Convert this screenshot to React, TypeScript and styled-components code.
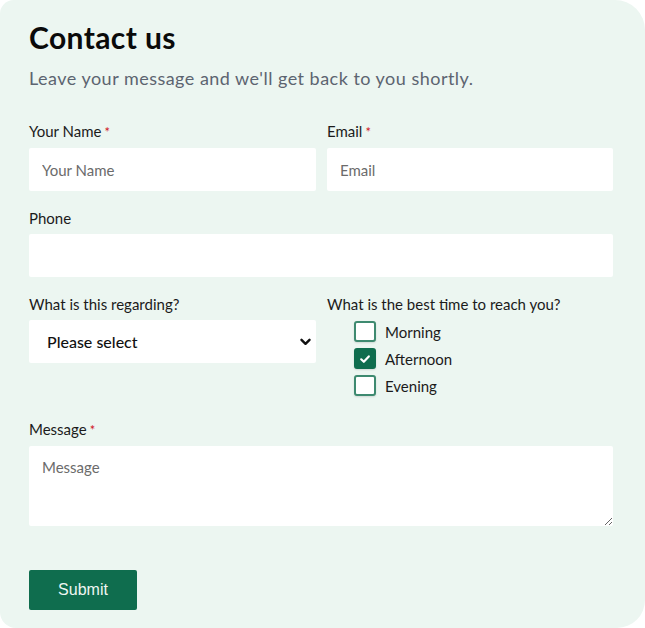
import React, { useState } from 'react';
import styled, { createGlobalStyle } from 'styled-components';

const GlobalStyle = createGlobalStyle`
  html, body {
    margin: 0;
    padding: 0;
    background: #ffffff;
  }
  * {
    box-sizing: border-box;
  }
`;

const times = ['Morning', 'Afternoon', 'Evening'];

const CheckIcon = () => (
  <svg width="12" height="12" viewBox="0 0 12 12" fill="none">
    <path
      d="M2.2 6.3 L4.8 8.8 L9.8 3.4"
      stroke="#ffffff"
      strokeWidth="2.2"
      strokeLinecap="round"
      strokeLinejoin="round"
    />
  </svg>
);

const Chevron = () => (
  <svg width="11" height="8" viewBox="0 0 11 8" fill="none">
    <path
      d="M1.5 1.8 L5.5 5.8 L9.5 1.8"
      stroke="#111111"
      strokeWidth="2.4"
      strokeLinecap="round"
      strokeLinejoin="round"
    />
  </svg>
);

const App: React.FC = () => {
  const [checked, setChecked] = useState<string[]>(['Afternoon']);

  const toggle = (t: string) => {
    setChecked((prev) =>
      prev.includes(t) ? prev.filter((x) => x !== t) : [...prev, t]
    );
  };

  return (
    <>
      <GlobalStyle />
      <Card>
        <Title>Contact us</Title>
        <Subtitle>Leave your message and we'll get back to you shortly.</Subtitle>

        <Form onSubmit={(e) => e.preventDefault()}>
          <Row>
            <Field>
              <Label>
                Your Name<Req>*</Req>
              </Label>
              <Input type="text" placeholder="Your Name" />
            </Field>
            <Field>
              <Label>
                Email<Req>*</Req>
              </Label>
              <Input type="email" placeholder="Email" />
            </Field>
          </Row>

          <Field>
            <Label>Phone</Label>
            <Input type="tel" />
          </Field>

          <Row>
            <Field>
              <Label>What is this regarding?</Label>
              <SelectWrap>
                <Select defaultValue="">
                  <option value="">Please select</option>
                  <option value="general">General enquiry</option>
                  <option value="support">Support</option>
                </Select>
                <SelectArrow>
                  <Chevron />
                </SelectArrow>
              </SelectWrap>
            </Field>
            <Field>
              <Label>What is the best time to reach you?</Label>
              <CheckList>
                {times.map((t) => {
                  const on = checked.includes(t);
                  return (
                    <CheckRow key={t} onClick={() => toggle(t)}>
                      <Box $checked={on}>{on && <CheckIcon />}</Box>
                      <CheckText>{t}</CheckText>
                    </CheckRow>
                  );
                })}
              </CheckList>
            </Field>
          </Row>

          <Field>
            <Label>
              Message<Req>*</Req>
            </Label>
            <TextArea placeholder="Message" />
          </Field>

          <SubmitButton type="submit">Submit</SubmitButton>
        </Form>
      </Card>
    </>
  );
};

export default App;

const Card = styled.div`
  width: 645px;
  height: 628px;
  background: #ecf6f1;
  border-radius: 14px 30px 28px 16px;
  padding: 20px 32px 0 29px;
  font-family: Lato, 'Open Sans', sans-serif;
  color: #1b1b1b;
`;

const Title = styled.h1`
  margin: 0;
  font-size: 30px;
  line-height: 34px;
  font-weight: 700;
  color: #0a0a0a;
  letter-spacing: 0.4px;
`;

const Subtitle = styled.p`
  margin: 14px 0 0;
  font-size: 18px;
  line-height: 20px;
  color: #5c6470;
  letter-spacing: 0.48px;
`;

const Form = styled.form`
  display: flex;
  flex-direction: column;
  gap: 18px;
  margin-top: 34px;
`;

const Row = styled.div`
  display: grid;
  grid-template-columns: 287px 286px;
  column-gap: 11px;
`;

const Field = styled.div`
  display: flex;
  flex-direction: column;
  gap: 7px;
`;

const Label = styled.label`
  font-size: 15px;
  line-height: 18px;
  color: #1b1b1b;
`;

const Req = styled.span`
  color: #d0151b;
  margin-left: 3px;
  font-size: 13px;
`;

const Input = styled.input`
  height: 43px;
  width: 100%;
  border: none;
  border-radius: 2px;
  background: #ffffff;
  padding: 0 13px;
  font-family: Lato, 'Open Sans', sans-serif;
  font-size: 15px;
  color: #1b1b1b;
  outline: none;

  &::placeholder {
    color: #6b6b6b;
  }
`;

const SelectWrap = styled.div`
  position: relative;
`;

const Select = styled.select`
  appearance: none;
  -webkit-appearance: none;
  height: 43px;
  width: 100%;
  border: none;
  border-radius: 2px;
  background: #ffffff;
  padding: 0 18px;
  font-family: Lato, 'Open Sans', sans-serif;
  font-size: 16px;
  font-weight: 500;
  color: #111111;
  outline: none;
`;

const SelectArrow = styled.span`
  position: absolute;
  right: 5px;
  top: 18px;
  display: flex;
  pointer-events: none;
`;

const CheckList = styled.div`
  display: flex;
  flex-direction: column;
  gap: 6px;
  padding-left: 27px;
  margin-top: 1px;
  margin-bottom: 6px;
`;

const CheckRow = styled.div`
  display: flex;
  align-items: center;
  gap: 9px;
  cursor: pointer;
`;

const Box = styled.span<{ $checked: boolean }>`
  width: 22px;
  height: 21px;
  border-radius: 3px;
  border: 2px solid ${(p) => (p.$checked ? '#0f6d4e' : '#3e8a70')};
  background: ${(p) => (p.$checked ? '#0f6d4e' : '#ffffff')};
  display: flex;
  align-items: center;
  justify-content: center;
  box-shadow: 0 1px 2px rgba(0, 0, 0, 0.12);
`;

const CheckText = styled.span`
  font-size: 15px;
  line-height: 18px;
  color: #1b1b1b;
`;

const TextArea = styled.textarea`
  height: 80px;
  width: 100%;
  border: none;
  border-radius: 2px;
  background: #ffffff;
  padding: 12px 13px;
  font-family: Lato, 'Open Sans', sans-serif;
  font-size: 15px;
  color: #1b1b1b;
  outline: none;

  &::placeholder {
    color: #6b6b6b;
  }
`;

const SubmitButton = styled.button`
  align-self: flex-start;
  width: 108px;
  height: 40px;
  margin-top: 26px;
  border: none;
  border-radius: 2px;
  background: #0f6d4e;
  color: #eef6f2;
  font-family: 'Liberation Sans', Arial, sans-serif;
  font-size: 16px;
  cursor: pointer;
`;
